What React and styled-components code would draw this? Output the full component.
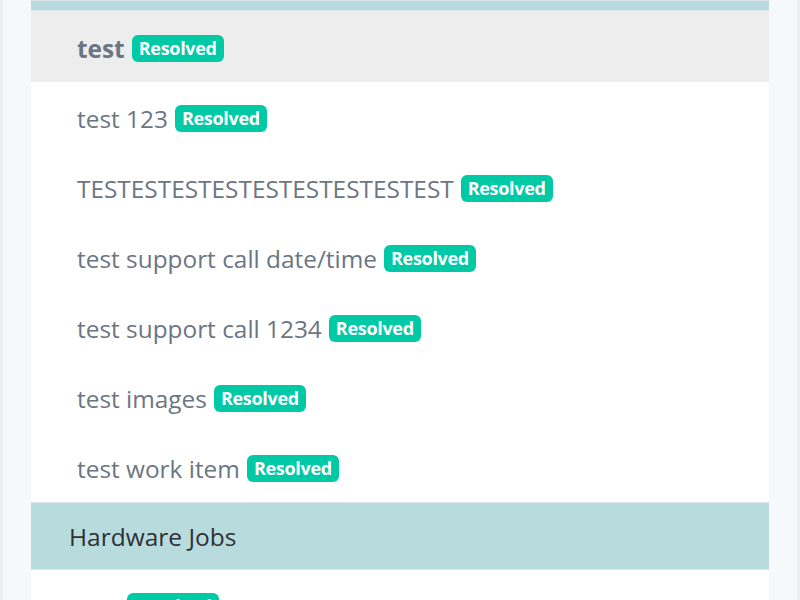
import styled, { createGlobalStyle } from 'styled-components'

const GlobalStyle = createGlobalStyle`
  html, body {
    margin: 0;
    padding: 0;
    background: #f7f8fb;
    font-family: "Open Sans", "Liberation Sans", sans-serif;
  }
`

const Page = styled.div`
  display: flex;
  flex-direction: row;
  height: 600px;
  overflow: hidden;
  border-left: 3px solid #eceef2;
  border-right: 3px solid #eceef2;
  padding: 0 28px;
`

const Panel = styled.div`
  flex: 1;
  background: #ffffff;
  display: flex;
  flex-direction: column;
`

const SectionHeader = styled.div`
  box-sizing: border-box;
  flex-shrink: 0;
  height: ${(props) => props.height || 68}px;
  background: #b8dcdd;
  border-top: 1px solid #e0e4ef;
  border-bottom: 1px solid #e0e4ef;
  display: flex;
  align-items: center;
  padding-left: 38px;
  font-size: 24.5px;
  color: #2e3135;
`

const Row = styled.div`
  box-sizing: border-box;
  flex-shrink: 0;
  height: ${(props) => props.height || 70}px;
  display: flex;
  align-items: center;
  padding: 3px 0 0 46px;
  background: ${(props) => (props.active ? '#ededed' : '#ffffff')};
  font-size: 24.4px;
  color: #6c7683;
  font-weight: ${(props) => (props.active ? 700 : 400)};
  white-space: nowrap;
`

const Badge = styled.span`
  display: inline-block;
  margin-left: 7px;
  padding: 2px 7px;
  border-radius: 6px;
  background: #00c9a6;
  color: #ffffff;
  font-size: 18px;
  font-weight: 700;
  letter-spacing: -0.3px;
  line-height: 23px;
`

const items = [
  'test 123',
  'TESTESTESTESTESTESTESTESTEST',
  'test support call date/time',
  'test support call 1234',
  'test images',
  'test work item',
]

export default function App() {
  return (
    <>
      <GlobalStyle />
      <Page>
        <Panel>
          <SectionHeader height={11} />
          <Row active height={71}>
            test<Badge>Resolved</Badge>
          </Row>
          {items.map((label) => (
            <Row key={label}>
              {label}<Badge>Resolved</Badge>
            </Row>
          ))}
          <SectionHeader>Hardware Jobs</SectionHeader>
          <Row>
            test<Badge>Resolved</Badge>
          </Row>
        </Panel>
      </Page>
    </>
  )
}
